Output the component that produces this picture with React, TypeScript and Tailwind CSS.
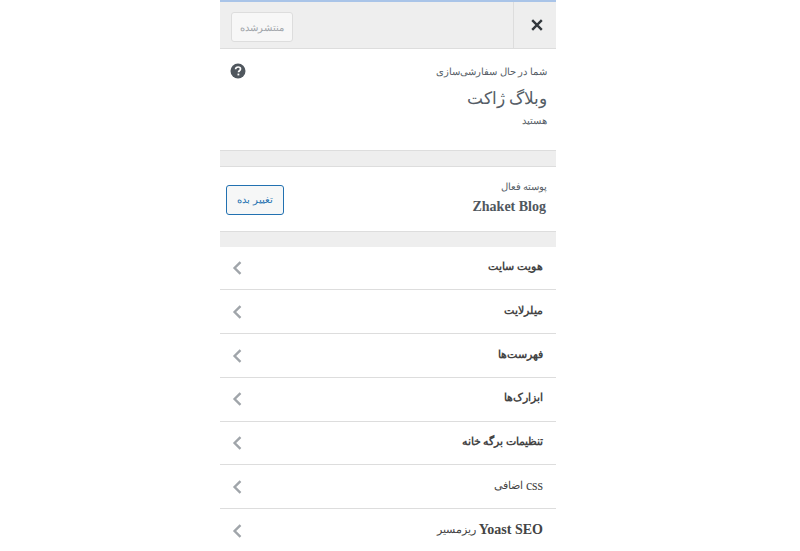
const sections = [
  { fa: "هویت سایت" },
  { fa: "میلرلایت" },
  { fa: "فهرست‌ها" },
  { fa: "ابزارک‌ها" },
  { fa: "تنظیمات برگه خانه" },
  { latin: "css", fa: "اضافی", normal: true },
  { latin: "Yoast SEO", fa: "ریزمسیر" },
];

type Section = { fa: string; latin?: string; normal?: boolean };

function SectionRow({ section }: { section: Section }) {
  return (
    <div className="flex h-[43.75px] items-center justify-between border-b border-[#dddddd] bg-white pr-[13px] pl-[12px]">
      <span className="mt-[-2px] flex items-center gap-[3px] text-[#444444]">
        {section.latin && (
          <span dir="ltr" className={section.normal ? "text-[14px]" : "text-[14px] font-bold"}>
            {section.latin}
          </span>
        )}
        <span className={section.latin ? "text-[10.5px]" : "text-[10.5px] font-bold"}>{section.fa}</span>
      </span>
      <svg className="h-[14px] w-[10px]" viewBox="0 0 10 14">
        <path d="M8.5 1.2 2.6 7l5.9 5.8" fill="none" stroke="#a0a5aa" strokeWidth="2.4" />
      </svg>
    </div>
  );
}

export default function App() {
  return (
    <div className="flex h-[551px] justify-start overflow-hidden bg-white pl-[220px] font-['Liberation_Serif',serif]">
      <div dir="rtl" className="h-[551px] w-[336px] overflow-hidden bg-[#eeeeee]">
        <div className="flex h-[49px] items-center justify-between border-t-2 border-b border-t-[#a9c4e8] border-b-[#dddddd] bg-[#eeeeee]">
          <div className="flex h-full w-[43px] items-center justify-center border-l border-[#dddddd]">
            <svg className="mr-[-3px] h-[12px] w-[12px]" viewBox="0 0 12 12">
              <path d="M1.2 1.2 10.8 10.8M10.8 1.2 1.2 10.8" fill="none" stroke="#32373c" strokeWidth="2.4" />
            </svg>
          </div>
          <button className="mt-[4px] ml-[11px] h-[30px] w-[62px] rounded-[3px] border border-[#dddddd] bg-[#f7f7f7] text-[10px] text-[#a0a5aa]">
            منتشرشده
          </button>
        </div>

        <div className="relative h-[102px] border-b border-[#dddddd] bg-white pt-[14px] pr-[9px] text-[#555d66]">
          <p className="text-[10.2px] leading-[18px]">شما در حال سفارشی‌سازی</p>
          <p className="mt-[4px] text-[17.4px] leading-[26px]">وبلاگ ژاکت</p>
          <p className="mt-[1px] text-[9.6px] leading-[18px]">هستید</p>
          <svg className="absolute top-[14px] left-[10px] h-[16px] w-[16px]" viewBox="0 0 16 16">
            <circle cx="8" cy="8" r="7.5" fill="#50575e" />
            <path d="M5.6 6.2c0-1.4 1-2.2 2.5-2.2s2.4.8 2.4 2c0 1.8-2 1.7-2 3.2" fill="none" stroke="#ffffff" strokeWidth="1.7" />
            <rect x="7.5" y="10.6" width="1.8" height="1.8" fill="#ffffff" />
          </svg>
        </div>

        <div className="h-[16px] border-b border-[#dddddd] bg-[#eeeeee]" />

        <div className="flex h-[65px] items-center justify-between border-b border-[#dddddd] bg-white pr-[9px] pl-[6px]">
          <div className="mt-[-4px]">
            <p className="text-[10px] leading-[18px] text-[#555d66]">پوسته فعال</p>
            <p dir="ltr" className="mt-[2px] pr-[1px] text-right text-[14px] leading-[18px] font-bold text-[#50575e]">Zhaket Blog</p>
          </div>
          <button className="mt-[2px] h-[30px] w-[58px] rounded-[3px] border border-[#2271b1] bg-[#f6f7f7] text-[10.4px] text-[#2271b1]">
            تغییر بده
          </button>
        </div>

        <div className="h-[14.7px] bg-[#eeeeee]" />

        {sections.map((section) => (
          <SectionRow key={section.fa} section={section} />
        ))}
      </div>
    </div>
  );
}
